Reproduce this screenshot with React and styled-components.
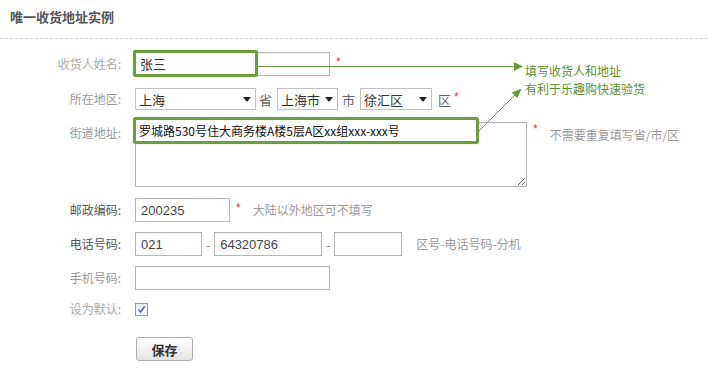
import styled, { createGlobalStyle } from 'styled-components';

const GlobalStyle = createGlobalStyle`
  body {
    margin: 0;
    background: #fff;
    font-family: "Noto Sans CJK SC", "Liberation Sans", sans-serif;
  }
`;

const App = () => {
  return (
    <Page>
      <GlobalStyle />
      <Header>
        <Title>唯一收货地址实例</Title>
      </Header>

      <Form>
        <Row>
          <Label $tone="light">收货人姓名:</Label>
          <Field>
            <Input $w={195} readOnly />
            <Highlight $top={-2} $w={125}>张三</Highlight>
          </Field>
          <Star $ml={6}>*</Star>
        </Row>

        <Row $gap={12}>
          <Label $tone="mid">所在地区:</Label>
          <SelectBox $w={121}>上海<Caret /></SelectBox>
          <Unit $ml={3}>省</Unit>
          <SelectBox $w={61} $ml={5}>上海市<Caret /></SelectBox>
          <Unit $ml={4}>市</Unit>
          <SelectBox $w={72} $ml={5}>徐汇区<Caret /></SelectBox>
          <Unit $ml={6}>区</Unit>
          <Star $ml={3}>*</Star>
        </Row>

        <Row $gap={12} $top>
          <Label $tone="mid">街道地址:</Label>
          <Field>
            <TextArea readOnly />
            <Highlight $top={-5} $w={346} $small>罗城路530号住大商务楼A楼5层A区xx组xxx-xxx号</Highlight>
          </Field>
          <Star $ml={6} $pt={1}>*</Star>
          <Note $ml={12} $pt={2}>不需要重复填写省/市/区</Note>
        </Row>

        <Row $gap={11}>
          <Label $tone="dark">邮政编码:</Label>
          <Input $w={95} defaultValue="200235" />
          <Star $ml={6}>*</Star>
          <Note $ml={12}>大陆以外地区可不填写</Note>
        </Row>

        <Row $gap={10}>
          <Label $tone="dark">电话号码:</Label>
          <Input $w={67} defaultValue="021" />
          <Dash>-</Dash>
          <Input $w={108} defaultValue="64320786" />
          <Dash>-</Dash>
          <Input $w={68} />
          <Note $ml={14}>区号-电话号码-分机</Note>
        </Row>

        <Row $gap={10}>
          <Label $tone="mid">手机号码:</Label>
          <Input $w={195} />
        </Row>

        <Row $gap={8}>
          <Label $tone="light">设为默认:</Label>
          <Check>
            <svg width="9" height="9" viewBox="0 0 9 9">
              <path d="M1.5 4.5 L3.6 7 L7.6 1.5" fill="none" stroke="#4b6fa3" strokeWidth="1.6" />
            </svg>
          </Check>
        </Row>

        <Row $gap={17}>
          <Label />
          <SaveButton type="button">保存</SaveButton>
        </Row>
      </Form>

      <Arrows width="708" height="372" viewBox="0 0 708 372">
        <line x1="258" y1="66.5" x2="516" y2="66.5" stroke="#6a9a3a" strokeWidth="1" />
        <polygon points="514,62 523,66.5 514,71" fill="#6a9a3a" />
        <line x1="479" y1="131" x2="516" y2="94" stroke="#5f6f4f" strokeWidth="0.8" />
        <polygon points="521.5,88.5 517.4,98.2 511.8,92.6" fill="#6a9a3a" />
      </Arrows>

      <Callout>
        填写收货人和地址<br />
        有利于乐趣购快速验货
      </Callout>
    </Page>
  );
};

// スタイル
const Page = styled.div`
  position: relative;
  width: 708px;
  height: 372px;
  overflow: hidden;
  background: #fff;
`;

const Header = styled.div`
  height: 29px;
  padding: 9px 10px 0;
  border-bottom: 1px dashed #d4d4d4;
`;

const Title = styled.h1`
  margin: 0;
  font-size: 13px;
  line-height: 16px;
  font-weight: bold;
  color: #555;
`;

const Form = styled.div`
  display: flex;
  flex-direction: column;
  padding-top: 13px;
`;

const Row = styled.div`
  display: flex;
  align-items: ${({ $top }) => ($top ? 'flex-start' : 'center')};
  min-height: 22px;
  margin-top: ${({ $gap }) => $gap || 0}px;
`;

const toneColors = { light: '#aaa', mid: '#999', dark: '#555' };

const Label = styled.div`
  flex: none;
  width: 121px;
  margin-right: 14px;
  text-align: right;
  font-size: 12px;
  line-height: 22px;
  color: ${({ $tone }) => toneColors[$tone] || '#999'};
`;

const Field = styled.div`
  position: relative;
  display: flex;
`;

const Input = styled.input`
  box-sizing: border-box;
  width: ${({ $w }) => $w}px;
  height: 24px;
  margin: 0;
  padding: 0 5px;
  border: 1px solid #b7b7b7;
  box-shadow: inset 0 1px 1px rgba(0, 0, 0, 0.06);
  font-family: "Liberation Sans", "Noto Sans CJK SC", sans-serif;
  font-size: 13px;
  color: #444;
  background: #fff;
  outline: none;
`;

const TextArea = styled.textarea`
  box-sizing: border-box;
  width: 392px;
  height: 65px;
  margin: 0;
  padding: 4px;
  border: 1px solid #b7b7b7;
  box-shadow: inset 0 1px 1px rgba(0, 0, 0, 0.06);
  font-size: 12px;
  outline: none;
`;

const Highlight = styled.div`
  position: absolute;
  left: -2px;
  top: ${({ $top }) => $top}px;
  box-sizing: border-box;
  width: ${({ $w }) => $w}px;
  height: 27px;
  display: flex;
  align-items: center;
  padding-left: ${({ $small }) => ($small ? 3 : 4)}px;
  border: 3px solid #6e9c40;
  border-radius: 3px;
  background: #fff;
  box-shadow: 0 0 1px rgba(60, 90, 30, 0.5);
  font-size: ${({ $small }) => ($small ? 12 : 13)}px;
  color: ${({ $small }) => ($small ? '#111' : '#333')};
  white-space: nowrap;
`;

const SelectBox = styled.div`
  box-sizing: border-box;
  width: ${({ $w }) => $w}px;
  height: 22px;
  margin-left: ${({ $ml }) => $ml || 0}px;
  padding: 0 4px 0 3px;
  display: flex;
  align-items: center;
  justify-content: space-between;
  border: 1px solid #c2c2c2;
  background: #fff;
  font-size: 13px;
  color: #333;
  white-space: nowrap;
`;

const Caret = styled.span`
  flex: none;
  width: 0;
  height: 0;
  border-left: 4px solid transparent;
  border-right: 4px solid transparent;
  border-top: 5px solid #222;
`;

const Unit = styled.span`
  margin-left: ${({ $ml }) => $ml || 0}px;
  font-size: 13px;
  color: #666;
`;

const Star = styled.span`
  margin-left: ${({ $ml }) => $ml || 0}px;
  padding-top: ${({ $pt }) => $pt || 0}px;
  font-family: "Liberation Sans", sans-serif;
  font-size: 12px;
  line-height: 16px;
  color: #e2365a;
  align-self: ${({ $pt }) => ($pt !== undefined ? 'flex-start' : 'auto')};
  position: relative;
  top: -2px;
`;

const Note = styled.span`
  margin-left: ${({ $ml }) => $ml || 0}px;
  padding-top: ${({ $pt }) => $pt || 0}px;
  font-size: 12px;
  line-height: 22px;
  color: #999;
`;

const Dash = styled.span`
  margin: 0 4px;
  font-size: 12px;
  color: #888;
`;

const Check = styled.span`
  box-sizing: border-box;
  width: 13px;
  height: 13px;
  display: flex;
  align-items: center;
  justify-content: center;
  border: 1px solid #9a9a9a;
  background: linear-gradient(#e9e9e9, #fff);
`;

const SaveButton = styled.button`
  box-sizing: border-box;
  width: 57px;
  height: 24px;
  margin-left: 1px;
  padding: 0;
  border: 1px solid #ababab;
  border-radius: 3px;
  background: linear-gradient(#fff, #e4e4e4);
  font-family: "Noto Sans CJK SC", sans-serif;
  font-size: 13px;
  font-weight: bold;
  color: #333;
`;

const Arrows = styled.svg`
  position: absolute;
  left: 0;
  top: 0;
  pointer-events: none;
`;

const Callout = styled.div`
  position: absolute;
  left: 525px;
  top: 62px;
  font-size: 12px;
  line-height: 18px;
  color: #5f8f2e;
`;

export default App;
